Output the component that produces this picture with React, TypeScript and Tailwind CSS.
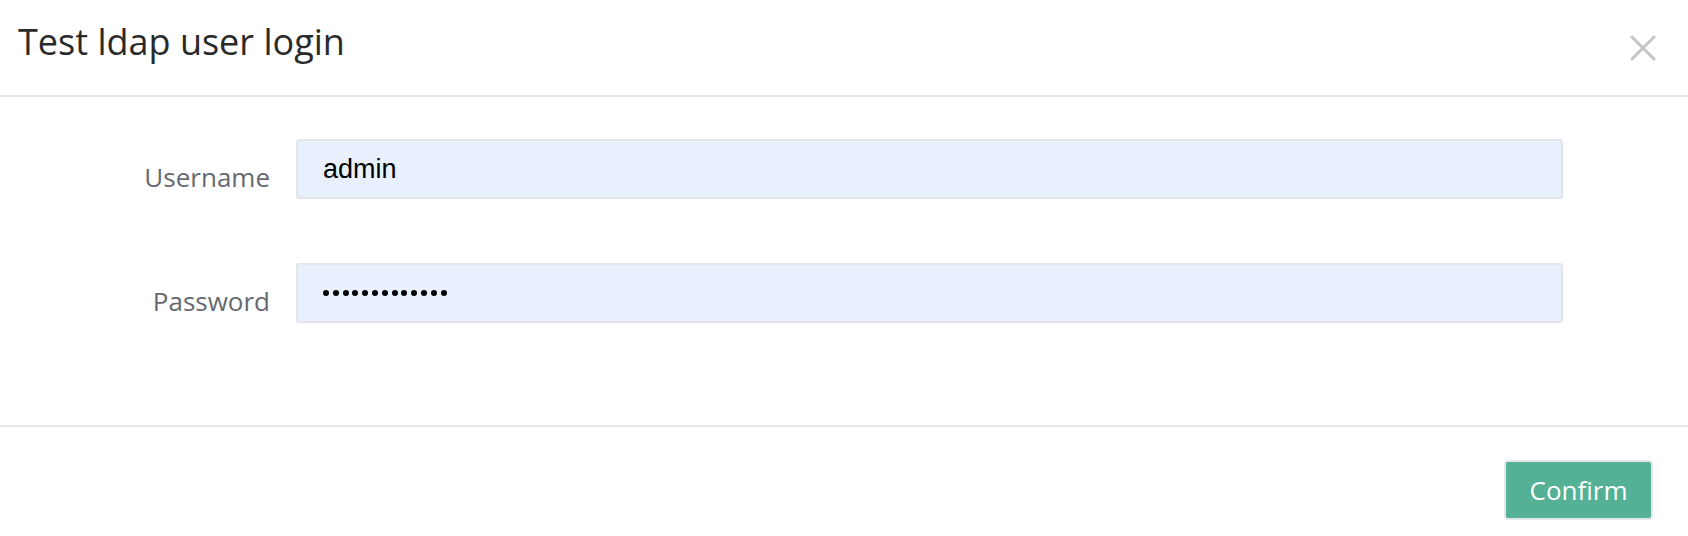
import React from "react";

export default function App() {
  const dots = Array.from({ length: 13 });
  return (
    <div className="w-[1688px] h-[536px] bg-white font-['Open_Sans',sans-serif] overflow-hidden">
      <div className="h-[97px] border-b-2 border-[#e5e6e8] flex items-start justify-between pl-[18px] pr-[32px]">
        <h1 className="text-[36px] leading-none text-[#2a2a2a] pt-[24px] font-normal">Test ldap user login</h1>
        <button className="mt-[35px] w-[26px] h-[26px] text-[#c4c4c4]" aria-label="close">
          <svg width="26" height="26" viewBox="0 0 26 26" fill="none" stroke="currentColor" strokeWidth="3" strokeLinecap="round">
            <path d="M2 2 L24 24 M24 2 L2 24" />
          </svg>
        </button>
      </div>
      <div className="h-[330px] border-b-2 border-[#e5e6e8] pt-[42px] flex flex-col gap-[56px]">
        <div className="flex items-start">
          <label className="w-[270px] text-right text-[26px] leading-[60px] h-[60px] mt-[8px] text-[#666a70]">Username</label>
          <input
            readOnly
            value="admin"
            className="ml-[26px] w-[1267px] h-[60px] bg-[#e8f0fe] border-2 border-[#e3e5e8] rounded-[3px] px-[25px] text-[27px] text-black font-['Liberation_Sans',Arial,sans-serif] outline-none"
          />
        </div>
        <div className="flex items-start">
          <label className="w-[270px] text-right text-[26px] leading-[60px] h-[60px] mt-[8px] text-[#666a70]">Password</label>
          <div className="ml-[26px] w-[1267px] h-[60px] bg-[#e8f0fe] border-2 border-[#e3e5e8] rounded-[3px] pl-[25px] flex items-center gap-[3.8px]">
            {dots.map((_, i) => (
              <span key={i} className="w-[6px] h-[6px] rounded-full bg-black" />
            ))}
          </div>
        </div>
      </div>
      <div className="flex justify-end pt-[33px] pr-[35px]">
        <button className="w-[149px] h-[60px] bg-[#54b195] text-white text-[26px] leading-none rounded-[4px] border-2 border-[#e4e7ea]">
          Confirm
        </button>
      </div>
    </div>
  );
}
